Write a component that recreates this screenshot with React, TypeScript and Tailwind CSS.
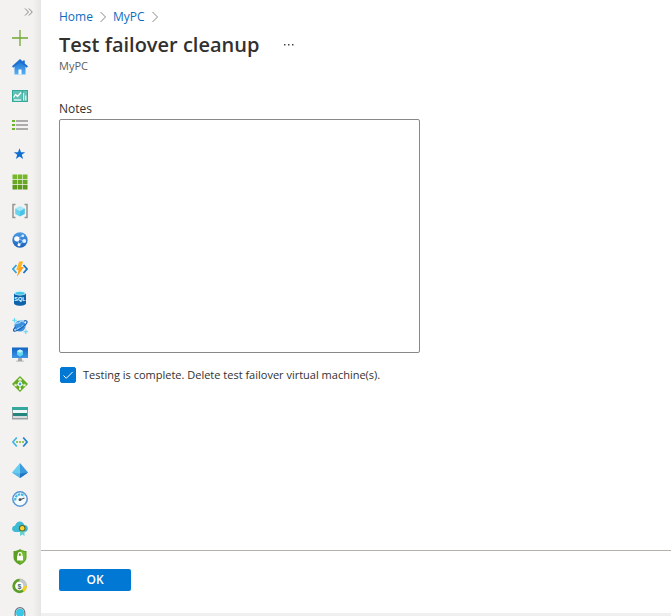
import type { ReactNode } from 'react';

type NavItem = { label: string; icon: ReactNode };

const navItems: NavItem[] = [
  {
    label: 'Create a resource',
    icon: <path d="M8 0v16M0 8h16" stroke="#6fa832" strokeWidth="1.3" fill="none" />,
  },
  {
    label: 'Home',
    icon: (
      <>
        <path d="M2.5 7v8.5h11V7L8 2z" fill="url(#homeBlue)" />
        <path d="M6.500 10.500h3v5h-3z" fill="#fff" />
        <path d="M8 0 0 7.300 1.200 8.800 8 3l6.800 5.800L16 7.300 12.800 4.400V1.500h-2v1.100z" fill="#1b6fd0" />
      </>
    ),
  },
  {
    label: 'Dashboard',
    icon: (
      <>
        <path d="M0 2h16v12H0z" fill="#35a99b" />
        <path d="M1 3h9v10H1zM11 3h4v10h-4z" fill="#62c1b4" />
        <path d="m1.500 9.500 2-3 2 2 3.500-4" stroke="#fff" strokeWidth="1.200" fill="none" />
        <path d="M2 12h7M11.500 5v7.500M13.800 7.500v5" stroke="#d8f4ef" strokeWidth="1.300" />
      </>
    ),
  },
  {
    label: 'All services',
    icon: (
      <>
        <path d="M4 4h12M4 8h12M4 12h12" stroke="#949494" strokeWidth="1.400" />
        <path d="M0 3h3v2H0zM0 7h3v2H0zM0 11h3v2H0z" fill="#6eb52f" />
      </>
    ),
  },
  {
    label: 'Favorites',
    icon: <path d="m7.500 2.200 1.500 4h4.200l-3.400 2.600 1.300 4.200-3.600-2.500L3.900 13l1.300-4.200-3.400-2.600H6z" fill="#0f6fd1" />,
  },
  {
    label: 'All resources',
    icon: (
      <>
        <path d="M.500.500h4.600v4.600H.500zM5.700.500h4.600v4.600H5.700zM10.900.500h4.600v4.600h-4.600z" fill="#76b82a" />
        <path d="M.500 5.700h4.600v4.600H.500zM5.700 5.700h4.600v4.600H5.700zM10.900 5.700h4.600v4.600h-4.600z" fill="#68a824" />
        <path d="M.500 10.900h4.600v4.600H.500zM5.700 10.900h4.600v4.600H5.700zM10.900 10.900h4.600v4.600h-4.600z" fill="#5c991d" />
      </>
    ),
  },
  {
    label: 'Resource groups',
    icon: (
      <>
        <path d="M3.500 1.500H1v13h2.500M12.500 1.500H15v13h-2.500" stroke="#949494" strokeWidth="1.500" fill="none" />
        <path d="m8 3 4.800 2.500L8 8 3.200 5.500z" fill="#a4e8f7" />
        <path d="M3.200 5.500 8 8v5.500L3.200 11z" fill="#67d3ee" />
        <path d="M12.800 5.500 8 8v5.500l4.800-2.500z" fill="#46c3e6" />
      </>
    ),
  },
  {
    label: 'App Services',
    icon: (
      <>
        <circle cx="8" cy="8" r="7.700" fill="url(#globeBlue)" />
        <path d="m5 6.500 6-3M5 6.500l2 6 5-3.500-7-2.500" stroke="#9fd0f7" strokeWidth=".8" fill="none" />
        <circle cx="4.800" cy="6.800" r="2.600" fill="#fff" />
        <circle cx="10.800" cy="3.800" r="1.400" fill="#cfe7fb" />
        <circle cx="12.300" cy="9" r="1.900" fill="#e3f1fc" />
        <circle cx="7" cy="12.700" r="1.500" fill="#fff" />
      </>
    ),
  },
  {
    label: 'Function App',
    icon: (
      <>
        <path d="M4.500 4 1 8l3.500 4" stroke="#35a3dc" strokeWidth="1.800" fill="none" />
        <path d="m11.500 4 3.500 4-3.500 4" stroke="#1674c6" strokeWidth="1.800" fill="none" />
        <path d="M7.200.500h4L9 6h2.800L5 15.500 6.800 9H4.300z" fill="#ffb321" />
        <path d="M9 6h2.800L5 15.500 6.800 9l2-3z" fill="#fca01c" />
      </>
    ),
  },
  {
    label: 'SQL databases',
    icon: (
      <>
        <path d="M2 2.800h12v10.500C14 16.600 2 16.600 2 13.300z" fill="#0d62aa" />
        <ellipse cx="8" cy="3" rx="6" ry="2.500" fill="#dcf4fb" />
        <ellipse cx="8" cy="3.200" rx="4.600" ry="1.500" fill="#45c5e7" />
        <text x="8" y="10.800" fontSize="5.500" fontWeight="700" textAnchor="middle" fill="#fff" className="font-['Liberation_Sans',sans-serif]">SQL</text>
      </>
    ),
  },
  {
    label: 'Azure Cosmos DB',
    icon: (
      <>
        <circle cx="8" cy="8" r="5.600" fill="#3992df" />
        <path d="M3 6c2-2 4 0 5-2s3-1 4 0M5 12c1-3 4-1 5-3s2-1 3-1" stroke="#9bd3f5" strokeWidth="1.600" fill="none" />
        <path d="M3.500 9C0 13 1.500 14 5.500 12.200c5-2.200 11.500-7.800 9-9.200-.8-.5-2.200 0-2.700.3" stroke="#1c60b8" strokeWidth="1.200" fill="none" />
        <path d="M2.500 0v4.500M.300 2.300h4.500M13.800 11.500V16M11.500 13.800H16" stroke="#63d6ef" strokeWidth="1.100" />
      </>
    ),
  },
  {
    label: 'Virtual machines',
    icon: (
      <>
        <path d="M0 .5h16v10.500H0z" fill="url(#screenBlue)" />
        <path d="m8 2.500 3 1.600v3.600L8 9.500 5 7.700V4.100z" fill="#63d7f2" />
        <path d="m8 2.500 3 1.600L8 5.800 5 4.100z" fill="#c8f4fc" />
        <path d="M6.300 11h3.400l.5 2.800h1.600v.7H4.200v-.7h1.600z" fill="#a2a5a8" />
      </>
    ),
  },
  {
    label: 'Load balancers',
    icon: (
      <>
        <path d="M8 0l8 8-8 8-8-8z" fill="#65a922" />
        <path d="M8 6V3M6.200 4.300 8 2.500l1.800 1.800M6 8.500l-3 1M3 7.700v2h2M10 8.500l3 1M13 7.700v2h-2M8 10v3" stroke="#e5f4d4" strokeWidth="1.200" fill="none" />
        <circle cx="8" cy="8" r="2.400" fill="#fff" />
        <circle cx="8" cy="8" r="1.400" fill="#45a9d8" />
        <circle cx="8" cy="13" r="1" fill="#fff" />
      </>
    ),
  },
  {
    label: 'Storage accounts',
    icon: (
      <>
        <path d="M0 2h16v12.500H0z" fill="#9da1a3" />
        <path d="M0 2h16v3H0z" fill="#35a79d" />
        <path d="M1 5h14v3H1z" fill="#eff7f7" />
        <path d="M1 8h14v3H1z" fill="#23857e" />
        <path d="M1 11h14v2H1z" fill="#d6dcdd" />
      </>
    ),
  },
  {
    label: 'Virtual networks',
    icon: (
      <>
        <path d="M4.800 3.500.900 8l3.900 4.500" stroke="#45b5e4" strokeWidth="1.800" fill="none" />
        <path d="M11.200 3.500 15.100 8l-3.900 4.500" stroke="#2384cd" strokeWidth="1.800" fill="none" />
        <circle cx="5" cy="8" r="1" fill="#75b82c" />
        <circle cx="8" cy="8" r="1" fill="#75b82c" />
        <circle cx="11" cy="8" r="1" fill="#75b82c" />
      </>
    ),
  },
  {
    label: 'Azure Active Directory',
    icon: (
      <>
        <path d="M8 0 0 9.500 8 15z" fill="#66cdf1" />
        <path d="m8 0 8 9.500L8 15z" fill="#3a9bdd" />
        <path d="m0 9.500 8 1 8-1L8 15z" fill="#5bb4e6" />
        <path d="M8 10.500V15l8-5.500z" fill="#2375bd" />
      </>
    ),
  },
  {
    label: 'Monitor',
    icon: (
      <>
        <circle cx="8" cy="8" r="7.200" fill="#f3fbfe" stroke="#5b95d1" strokeWidth="1.500" />
        <path d="M3.400 9.500A5 5 0 0 1 12 5" stroke="#43b8e3" strokeWidth="2.200" strokeDasharray="2.500 .7" fill="none" />
        <path d="m8 8.700 4.500-1.700" stroke="#53565d" strokeWidth="1.200" />
        <circle cx="8" cy="8.700" r="1.400" fill="#4b4f56" />
      </>
    ),
  },
  {
    label: 'Advisor',
    icon: (
      <>
        <path d="M3.800 12C-1 12-1 6 3 5.700 4.500.200 11 0 12.200 5c4.800 0 5 7 0 7z" fill="#3dbbd6" />
        <path d="M8 10h4.500v6l-2.200-1.500L8 16z" fill="#62d3ce" />
        <circle cx="10.200" cy="8.300" r="3.300" fill="#5c6a28" />
        <circle cx="10.200" cy="8.300" r="2.200" fill="#ffd334" />
      </>
    ),
  },
  {
    label: 'Security Center',
    icon: (
      <>
        <path d="M8 0c2 1.500 4 2 6.500 2v6c0 4-3 6.300-6.500 8-3.500-1.700-6.500-4-6.500-8V2C4 2 6 1.500 8 0z" fill="#5c9f22" />
        <path d="M8 1.200c2 1.200 3.600 1.700 5.500 1.800V8c0 3.300-2.500 5.300-5.500 6.800z" fill="#73ba32" />
        <path d="M6.200 7V5.400a1.800 1.800 0 0 1 3.600 0V7" stroke="#fff" strokeWidth="1.200" fill="none" />
        <path d="M5 6.800h6v4.700H5z" fill="#fff" />
      </>
    ),
  },
  {
    label: 'Cost Management',
    icon: (
      <>
        <circle cx="7.500" cy="8" r="5.800" stroke="#5b9f28" strokeWidth="2.800" fill="#fff" />
        <path d="M7.500 2.200A5.800 5.800 0 0 1 13.300 8" stroke="#c4c6c8" strokeWidth="3.400" fill="none" />
        <path d="M13.300 8A5.800 5.800 0 0 1 11 12.600" stroke="#f5cf2a" strokeWidth="3.400" fill="none" />
        <text x="7.500" y="10.600" fontSize="7" fontWeight="700" textAnchor="middle" fill="#3b6c76" className="font-['Liberation_Sans',sans-serif]">$</text>
      </>
    ),
  },
  {
    label: 'Help + support',
    icon: (
      <>
        <circle cx="8" cy="5.800" r="4" fill="#39c7e8" />
        <path d="M3.200 9.500V5.500A4.800 4.800 0 0 1 12.800 5.500V9.500" stroke="#6f7680" strokeWidth="1.200" fill="none" />
        <path d="M3 16c0-6 10-6 10 0z" fill="#39c7e8" />
      </>
    ),
  },
];

function Sidebar() {
  return (
    <nav
      aria-label="Portal"
      className="flex h-full w-[41px] shrink-0 flex-col overflow-hidden bg-linear-to-r from-[#f3f2f1] from-80% to-[#e6e5e4]"
    >
      <button aria-label="Expand menu" className="flex h-6 shrink-0 items-center justify-end pr-2">
        <svg width="9" height="8" viewBox="0 0 9 8" fill="none" stroke="#777" strokeWidth=".9">
          <path d="m1 .5 3.500 3.500L1 7.500M4.800.500 8.300 4 4.800 7.500" />
        </svg>
      </button>
      <svg width="0" height="0" className="absolute" aria-hidden="true">
        <defs>
          <linearGradient id="homeBlue" x1="0" y1="0" x2="0" y2="1">
            <stop stopColor="#1c73d2" />
            <stop offset="1" stopColor="#58b0f3" />
          </linearGradient>
          <linearGradient id="globeBlue" x1="0" y1="0" x2="0" y2="1">
            <stop stopColor="#4c9be3" />
            <stop offset="1" stopColor="#1c62ba" />
          </linearGradient>
          <linearGradient id="screenBlue" x1="0" y1="0" x2="0" y2="1">
            <stop stopColor="#1263c0" />
            <stop offset="1" stopColor="#3d97e8" />
          </linearGradient>
        </defs>
      </svg>
      <ul className="grid h-[605px] shrink-0 auto-rows-fr pr-0.5">
        {navItems.map((item) => (
          <li key={item.label} className="flex items-center justify-center">
            <a href="#" aria-label={item.label}>
              <svg width="16" height="16" viewBox="0 0 16 16" className="block">
                {item.icon}
              </svg>
            </a>
          </li>
        ))}
      </ul>
    </nav>
  );
}

function Separator() {
  return (
    <svg width="6" height="12" viewBox="0 0 6 12" fill="none" stroke="#888" aria-hidden="true">
      <path d="m.5 1 5 5-5 5" />
    </svg>
  );
}

export default function App() {
  return (
    <div className="flex h-screen overflow-hidden bg-white font-['Open_Sans','Noto_Sans',sans-serif] text-xs text-[#323130]">
      <Sidebar />
      <div className="flex min-w-0 flex-1 flex-col border-b-3 border-[#f0f0f0]">
        <main className="flex-1 px-[18px] pt-[9px]">
          <nav aria-label="Breadcrumb" className="flex items-center gap-[7px] leading-4 text-[#0f6cbd]">
            <a href="#">Home</a>
            <Separator />
            <a href="#">MyPC</a>
            <Separator />
          </nav>
          <header>
            <div className="flex items-center gap-6">
              <h1 className="text-xl leading-10 font-semibold">Test failover cleanup</h1>
              <button aria-label="More actions" className="flex h-4 w-3 items-center">
                <svg width="12" height="4" viewBox="0 0 12 4" fill="#444">
                  <path d="M1 1h1.500v1.500H1zM5 1h1.500v1.500H5zM9 1h1.500v1.500H9z" />
                </svg>
              </button>
            </div>
            <p className="-mt-[7px] text-[11px] leading-4 text-[#605e5c]">MyPC</p>
          </header>
          <form id="cleanup" className="pt-[27px]" onSubmit={(e) => e.preventDefault()}>
            <label htmlFor="notes" className="block leading-4">
              Notes
            </label>
            <textarea
              id="notes"
              className="mt-0.5 block h-[234px] w-full max-w-[361px] resize-none rounded-[2px] border border-[#8a8886] bg-white p-2 outline-none"
            />
            <label className="mt-3.5 flex items-center gap-[7px] pl-px text-[11px] leading-4">
              <span className="grid size-4 shrink-0">
                <input
                  type="checkbox"
                  defaultChecked
                  className="peer col-start-1 row-start-1 size-4 appearance-none rounded-[2px] border border-[#605e5c] checked:border-[#0078d4] checked:bg-[#0078d4]"
                />
                <svg
                  viewBox="0 0 16 16"
                  fill="none"
                  stroke="#fff"
                  className="pointer-events-none invisible col-start-1 row-start-1 size-4 peer-checked:visible"
                >
                  <path d="m3.500 8.500 2.800 2.800 6.400-6.400" />
                </svg>
              </span>
              Testing is complete. Delete test failover virtual machine(s).
            </label>
          </form>
        </main>
        <footer className="border-t border-[#b3b0ad] px-[18px] pt-[18px] pb-[22px]">
          <button
            type="submit"
            form="cleanup"
            className="block h-[22px] w-18 rounded-[2px] bg-[#0078d4] text-xs font-semibold text-white"
          >
            OK
          </button>
        </footer>
      </div>
    </div>
  );
}
